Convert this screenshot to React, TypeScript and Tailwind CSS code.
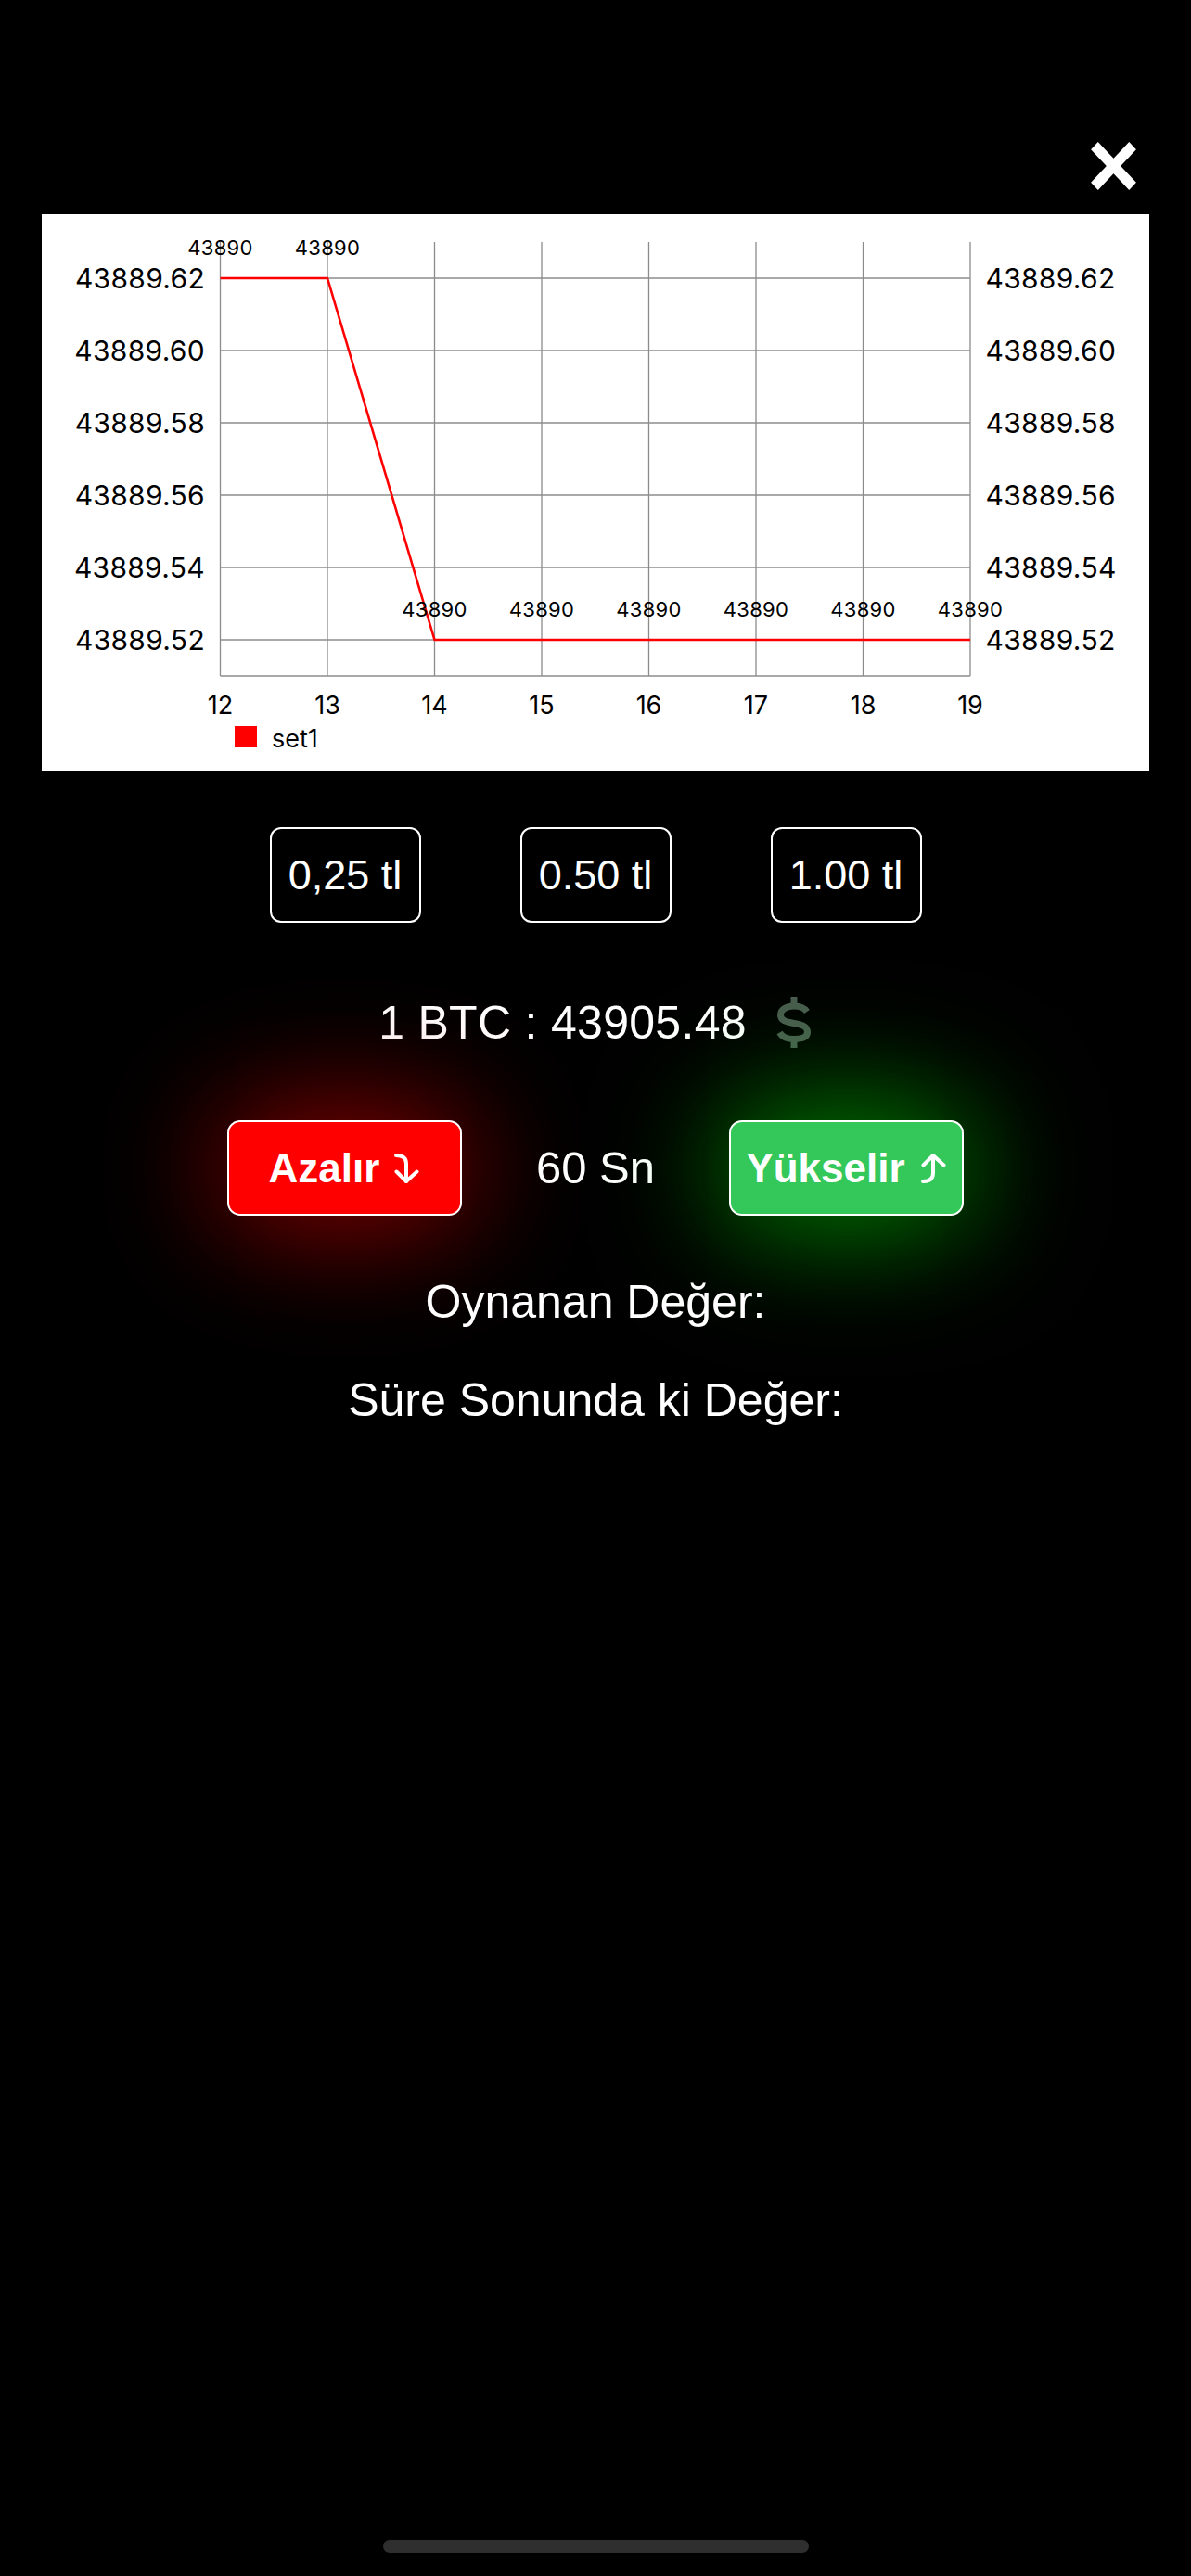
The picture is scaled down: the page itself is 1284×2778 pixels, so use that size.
const xTicks = [12, 13, 14, 15, 16, 17, 18, 19];
const yTicks = ["43889.62", "43889.60", "43889.58", "43889.56", "43889.54", "43889.52"];
const values = [0, 0, 5, 5, 5, 5, 5, 5];

const xAt = (i: number) => 192.5 + i * 115.5;
const yAt = (i: number) => 69 + i * 78;

const PriceChart = () => {
  const points = values.map((v, i) => `${xAt(i)},${yAt(v)}`).join(" ");
  return (
    <svg width="1194" height="600" viewBox="0 0 1194 600" className="block">
      {/* grid */}
      {xTicks.map((_, i) => (
        <line key={`v${i}`} x1={xAt(i)} y1={30} x2={xAt(i)} y2={498} stroke="#8c8c8c" strokeWidth="1.3" />
      ))}
      {yTicks.map((_, i) => (
        <line key={`h${i}`} x1={192.5} y1={yAt(i)} x2={1001} y2={yAt(i)} stroke="#8c8c8c" strokeWidth="1.3" />
      ))}
      <line x1={192.5} y1={498} x2={1001} y2={498} stroke="#8c8c8c" strokeWidth="1.5" />

      {/* data */}
      <polyline points={points} fill="none" stroke="#ff0000" strokeWidth="2.6" strokeLinejoin="miter" />

      <g fontFamily="Inter, 'Liberation Sans', sans-serif" fill="#000">
        {values.map((v, i) => (
          <text key={`val${i}`} x={xAt(i)} y={yAt(v) - 25.5} fontSize="22" textAnchor="middle" letterSpacing="0.3">
            43890
          </text>
        ))}
        {yTicks.map((t, i) => (
          <text key={`l${i}`} x={176} y={yAt(i) + 11} fontSize="30" textAnchor="end" letterSpacing="0.3">
            {t}
          </text>
        ))}
        {yTicks.map((t, i) => (
          <text key={`r${i}`} x={1017.5} y={yAt(i) + 11} fontSize="30" textAnchor="start" letterSpacing="0.3">
            {t}
          </text>
        ))}
        {xTicks.map((t, i) => (
          <text key={`x${i}`} x={xAt(i)} y={539} fontSize="27" textAnchor="middle">
            {t}
          </text>
        ))}
        <rect x={208} y={552} width={24} height={23} fill="#ff0000" />
        <text x={248} y={575} fontSize="27">
          set1
        </text>
      </g>
    </svg>
  );
};

const ArrowDown = () => (
  <svg width="28" height="34" viewBox="0 0 28 34" fill="none" stroke="white" strokeWidth="4" strokeLinecap="round" strokeLinejoin="round">
    <path d="M2 3 Q13 3 13 12 L13 31" />
    <path d="M2.5 20.5 L13 31 L24.5 20.5" />
  </svg>
);

const ArrowUp = () => (
  <svg width="28" height="34" viewBox="0 0 28 34" fill="none" stroke="white" strokeWidth="4" strokeLinecap="round" strokeLinejoin="round">
    <path d="M2 31 Q13 31 13 22 L13 3" />
    <path d="M2.5 13.5 L13 3 L24.5 13.5" />
  </svg>
);

const DollarIcon = () => (
  <svg width="40" height="57" viewBox="0 0 40 57" fill="none" stroke="#4a5b4f" strokeWidth="7">
    <path d="M34 17 C31 12.5 26 11 20 11 C12 11 5.5 14.5 5.5 20.5 C5.5 26.5 11 28 20 29.5 C29 31 34.5 33 34.5 39 C34.5 44.5 28 46.5 20 46.5 C13 46.5 7 44 4.5 39.5" />
    <path d="M20 1 V11 M20 46.5 V56" />
  </svg>
);

export default function App() {
  const amounts = ["0,25 tl", "0.50 tl", "1.00 tl"];
  return (
    <div className="min-h-screen bg-black flex flex-col text-white font-['Liberation_Sans',Arial,sans-serif]">
      {/* close */}
      <div className="flex justify-end pt-[153px] pr-[59px]">
        <svg width="49" height="52" viewBox="0 0 50 50" preserveAspectRatio="none" stroke="white" strokeWidth="11">
          <line x1="4" y1="4" x2="46" y2="46" />
          <line x1="46" y1="4" x2="4" y2="46" />
        </svg>
      </div>

      {/* chart */}
      <div className="mt-[26px] mx-[45px] h-[600px] bg-white overflow-hidden">
        <PriceChart />
      </div>

      {/* amounts */}
      <div className="mt-[61px] flex justify-center gap-[107px]">
        {amounts.map((a) => (
          <button
            key={a}
            className="w-[163px] h-[103px] rounded-[12px] border-2 border-white flex items-center justify-center text-[45px] leading-none"
          >
            {a}
          </button>
        ))}
      </div>

      {/* price */}
      <div className="mt-[79px] h-[57px] flex items-center justify-center gap-[31px]">
        <span className="text-[50px] leading-none tracking-[0.3px]">1 BTC : 43905.48</span>
        <DollarIcon />
      </div>

      {/* actions */}
      <div className="mt-[77px] flex justify-center">
        <button className="w-[253px] h-[103px] rounded-[14px] border-2 border-white bg-[#ff0000] shadow-[0_0_120px_rgba(255,0,0,0.4),0_0_160px_rgba(255,0,0,0.4)] flex items-center justify-center gap-[16px]">
          <span className="text-[44px] font-bold leading-none">Azalır</span>
          <ArrowDown />
        </button>
        <div className="w-[288px] flex items-center justify-center text-[49px] leading-none">60 Sn</div>
        <button className="w-[253px] h-[103px] rounded-[14px] border-2 border-white bg-[#34c759] shadow-[0_0_120px_rgba(0,255,0,0.38),0_0_160px_rgba(0,255,0,0.38)] flex items-center justify-center gap-[17px]">
          <span className="text-[44px] font-bold leading-none">Yükselir</span>
          <ArrowUp />
        </button>
      </div>

      <p className="mt-[68px] text-center text-[50px] leading-none">Oynanan Değer:</p>
      <p className="mt-[56px] text-center text-[50px] leading-none">Süre Sonunda ki Değer:</p>

      {/* home indicator */}
      <div className="mt-auto mb-[25px] self-center w-[459px] h-[14px] rounded-full bg-[#2f2f2f]" />
    </div>
  );
}
